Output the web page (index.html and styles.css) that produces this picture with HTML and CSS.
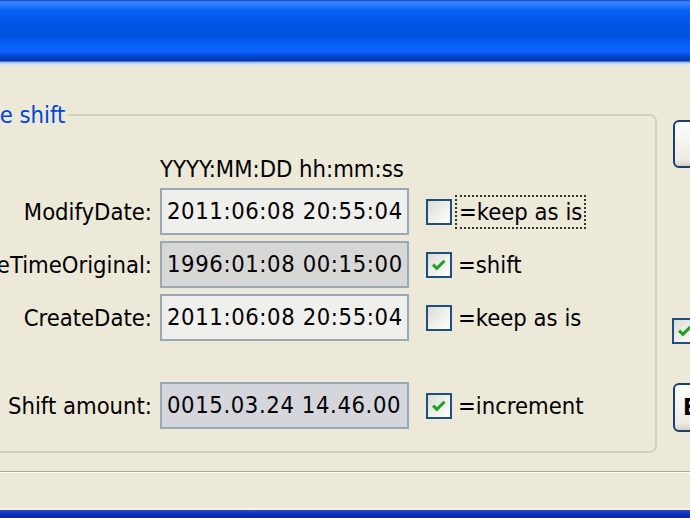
FILE: index.html
```html
<!DOCTYPE html>
<html lang="en">
<head>
  <meta charset="UTF-8" />
  <title>Date/Time shift</title>
  <link rel="stylesheet" href="styles.css">
</head>
<body>
  <div class="window">
    <div class="titlebar"></div>

    <div class="client">
      <div class="main">
        <!-- Group box -->
        <fieldset class="group">
          <legend>Date/Time shift</legend>
          <div class="rows">
            <div></div>
            <div class="format">YYYY:MM:DD hh:mm:ss</div>
            <div></div>
            <div></div>

            <div class="label">ModifyDate:</div>
            <div class="field light">2011:06:08 20:55:04</div>
            <div class="check"></div>
            <div class="opt"><span class="focus">=keep as is</span></div>

            <div class="label">DateTimeOriginal:</div>
            <div class="field gray">1996:01:08 00:15:00</div>
            <div class="check on"><svg viewBox="0 0 26 26"><path d="M6 12.5 L10.5 17 L19.5 8"/></svg></div>
            <div class="opt">=shift</div>

            <div class="label">CreateDate:</div>
            <div class="field light">2011:06:08 20:55:04</div>
            <div class="check"></div>
            <div class="opt">=keep as is</div>

            <div class="label shift-row">Shift amount:</div>
            <div class="field gray blue shift-row">0015.03.24 14.46.00</div>
            <div class="check on shift-row"><svg viewBox="0 0 26 26"><path d="M6 12.5 L10.5 17 L19.5 8"/></svg></div>
            <div class="opt shift-row">=increment</div>
          </div>
        </fieldset>

        <!-- Right column -->
        <div class="side">
          <div class="btn"></div>
          <div class="check on side-check"><svg viewBox="0 0 26 26"><path d="M6 12.5 L10.5 17 L19.5 8"/></svg></div>
          <div class="btn btn-text">Execute</div>
        </div>
      </div>

      <div class="separator"></div>
    </div>

    <div class="frame-bottom"></div>
  </div>
</body>
</html>
```

FILE: styles.css
```css
/* Reset */
* {
  box-sizing: border-box;
}
html, body {
  margin: 0;
  padding: 0;
  width: 690px;
  height: 518px;
  overflow: hidden;
  background: #ece9d8;
  font-family: 'DejaVu Sans Condensed', 'DejaVu Sans', sans-serif;
  font-size: 23.6px;
  color: #000;
}

.window {
  display: flex;
  flex-direction: column;
  height: 518px;
}

/* Title bar (XP blue) */
.titlebar {
  height: 66px;
  flex: none;
  background: linear-gradient(to bottom,
    #0a45c9 0px, #3b86f5 2px, #2a7bff 5px, #0a60f2 10px,
    #0055e6 24px, #0053e1 36px, #0a62fb 46px, #0b63fb 52px,
    #0047d0 56px, #003aa8 61px, #8fb0e8 62px, #d4e0f4 64px, #e6e8ef 66px);
}

/* Dialog body */
.client {
  flex: 1;
  display: flex;
  flex-direction: column;
  background: #ece9d8;
  border-bottom: 2px solid #f6f4ec;
}

.main {
  display: flex;
  gap: 16px;
  margin-top: 35px;
}

/* Group box */
.group {
  margin: 0 0 0 -120px;
  width: 777px;
  flex: none;
  border: 2px solid #d3d0bf;
  border-radius: 7px;
  padding: 26px 0 22px 14px;
}
.group legend {
  color: #0046d5;
  padding: 0 3px 0 2px;
  line-height: 28px;
  margin-left: 5px;
  white-space: nowrap;
}

.rows {
  display: grid;
  grid-template-columns: 264px 249px 26px auto;
  column-gap: 0;
  row-gap: 6px;
  align-items: center;
}
.format {
  line-height: 28px;
  margin-bottom: -1px;
  white-space: nowrap;
}
.label {
  text-align: right;
  padding-right: 8px;
  white-space: nowrap;
}
.field {
  grid-column: 2;
  height: 47px;
  border: 2px solid #9aa7b4;
  padding: 0 0 0 5px;
  line-height: 43px;
  letter-spacing: 0.6px;
  white-space: nowrap;
}
.field.light {
  background: #efefec;
}
.field.gray {
  background: #d7d7d6;
}
.field.blue {
  background: #d4d6dc;
}
.field + .check {
  margin-left: 17px;
}

/* XP checkbox */
.check {
  width: 26px;
  height: 26px;
  border: 2px solid #1f4f7e;
  background: linear-gradient(135deg, #dcdcd5 0%, #f2f2ee 60%, #fff 100%);
}
.check svg {
  display: block;
  width: 22px;
  height: 22px;
}
.check path {
  fill: none;
  stroke: #21a121;
  stroke-width: 3.6;
}
.opt {
  margin-left: 23px;
  white-space: nowrap;
}
.focus {
  outline: 2px dotted #333;
  outline-offset: 1px;
  padding: 0 1px;
}
.shift-row {
  margin-top: 35px;
}

/* Right column */
.side {
  display: flex;
  flex-direction: column;
  padding-top: 19px;
}
.btn {
  width: 80px;
  height: 48px;
  border: 2px solid #1c3e6c;
  border-radius: 6px;
  background: linear-gradient(to bottom, #fdfdfb, #ecebe5 85%, #d6d0c5);
  font-weight: bold;
  line-height: 44px;
  padding-left: 8px;
}
.side-check {
  margin-top: 150px;
  margin-left: -1px;
}
.btn-text {
  margin-top: 39px;
  height: 49px;
}

.separator {
  margin-top: 18px;
  height: 2px;
  border-top: 1px solid #aca899;
  border-bottom: 1px solid #ffffff;
}

.frame-bottom {
  height: 8px;
  flex: none;
  background: linear-gradient(to bottom, #2a4ed0, #0b2fb8 50%, #0a2aa5);
}
```
